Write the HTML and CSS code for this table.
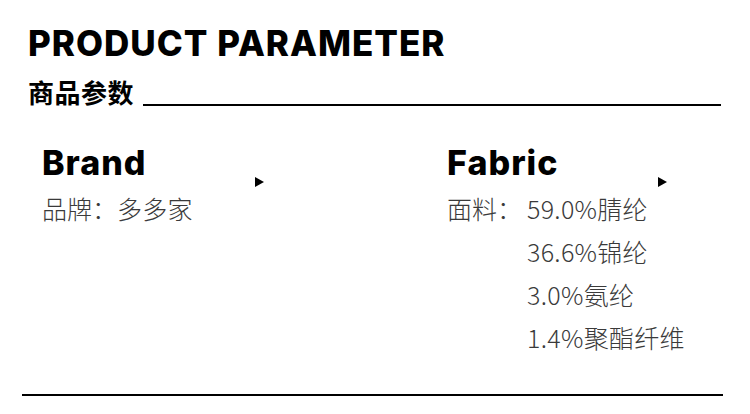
FILE: index.html
```html
<!DOCTYPE html>
<html lang="zh-CN">
<head>
<meta charset="utf-8">
<title>Product Parameter</title>
<link rel="stylesheet" href="styles.css">
</head>
<body>
<main class="page">
  <h1 class="title">PRODUCT PARAMETER</h1>
  <div class="subtitle">
    <span class="subtitle-text">商品参数</span>
    <span class="subtitle-rule"></span>
  </div>
  <div class="params">
    <section class="param">
      <div class="param-head">
        <h2 class="param-name">Brand</h2>
        <span class="arrow"></span>
      </div>
      <div class="param-row">
        <span class="param-label param-label-inline">品牌：</span>
        <div class="param-values">
          <span>多多家</span>
        </div>
      </div>
    </section>
    <section class="param">
      <div class="param-head">
        <h2 class="param-name">Fabric</h2>
        <span class="arrow"></span>
      </div>
      <div class="param-row">
        <span class="param-label">面料：</span>
        <div class="param-values">
          <span>59.0%腈纶</span>
          <span>36.6%锦纶</span>
          <span>3.0%氨纶</span>
          <span>1.4%聚酯纤维</span>
        </div>
      </div>
    </section>
  </div>
  <div class="bottom-rule"></div>
</main>
</body>
</html>
```

FILE: styles.css
```css
html, body {
  margin: 0;
  padding: 0;
  background: #ffffff;
}

body {
  width: 750px;
  height: 414px;
  overflow: hidden;
  font-family: "Noto Sans CJK SC", "Noto Sans", sans-serif;
  color: #000;
}

.page {
  padding: 23px 28px 0 28px;
  display: flex;
  flex-direction: column;
}

.title {
  margin: 0;
  font-family: Inter, "Noto Sans", sans-serif;
  font-weight: 800;
  font-size: 35px;
  line-height: 40px;
  letter-spacing: 1px;
  color: #000;
}

.subtitle {
  display: flex;
  align-items: center;
  margin-top: 14px;
  height: 30px;
}

.subtitle-text {
  font-weight: 700;
  font-size: 26px;
  line-height: 30px;
  letter-spacing: 0.5px;
}

.subtitle-rule {
  flex: 1;
  height: 2px;
  background: #000;
  margin-left: 9px;
  margin-right: 1px;
  align-self: flex-end;
  margin-bottom: 1px;
}

.params {
  display: grid;
  grid-template-columns: 222px 220px;
  column-gap: 183px;
  padding-left: 14px;
  margin-top: 36px;
}

.param-head {
  display: flex;
  align-items: flex-end;
  justify-content: space-between;
  height: 40px;
}

.param-name {
  margin: 0;
  font-family: Inter, "Noto Sans", sans-serif;
  font-weight: 800;
  font-size: 34px;
  line-height: 40px;
  letter-spacing: 1px;
  color: #000;
}

.arrow {
  width: 0;
  height: 0;
  border-top: 5.5px solid transparent;
  border-bottom: 5.5px solid transparent;
  border-left: 9px solid #000;
  margin-bottom: -4px;
}

.param-row {
  display: flex;
  margin-top: 4px;
  font-size: 25px;
  font-weight: 200;
  color: #3a3a3a;
  white-space: nowrap;
}

.param-label {
  line-height: 43px;
  width: 80px;
  flex: none;
}

.param-label-inline {
  width: 75px;
}

.param-values {
  display: flex;
  flex-direction: column;
}

.param-values span {
  line-height: 43px;
  letter-spacing: 0.3px;
}

.bottom-rule {
  margin-top: 35px;
  margin-left: -6px;
  margin-right: -1px;
  height: 2px;
  background: #000;
}
```
